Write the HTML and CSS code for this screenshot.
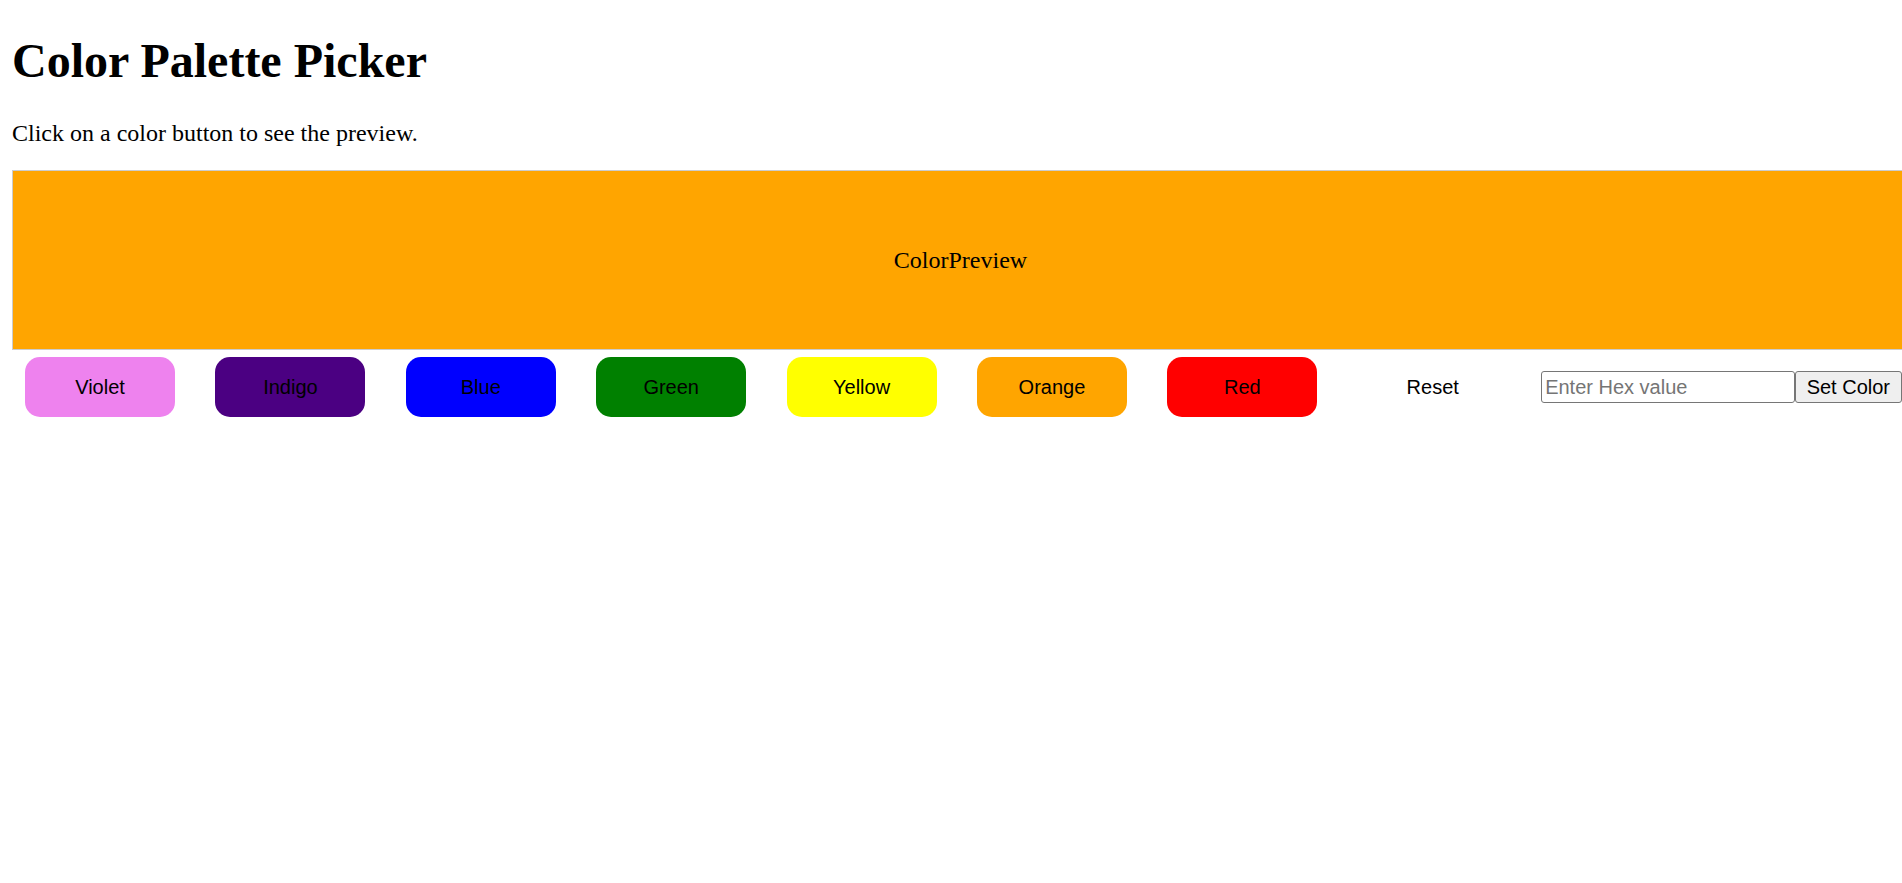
FILE: index.html
```html
<!DOCTYPE html>
<html lang="en">
<head>
<meta charset="utf-8">
<title>Color Palette Picker</title>
<link rel="stylesheet" href="styles.css">
</head>
<body>
<h1 class="title">Color Palette Picker</h1>
<p class="intro">Click on a color button to see the preview.</p>
<div class="preview">ColorPreview</div>
<div class="palette">
  <button class="swatch violet">Violet</button>
  <button class="swatch indigo">Indigo</button>
  <button class="swatch blue">Blue</button>
  <button class="swatch green">Green</button>
  <button class="swatch yellow">Yellow</button>
  <button class="swatch orange">Orange</button>
  <button class="swatch red">Red</button>
  <button class="swatch reset">Reset</button>
  <div class="hex-group">
    <input class="hex-input" type="text" placeholder="Enter Hex value">
    <button class="set-btn">Set Color</button>
  </div>
</div>
</body>
</html>
```
FILE: styles.css
```css
html {
  overflow: hidden;
}
body {
  margin: 12px 0 12px 12px;
  font-family: "Liberation Serif", "Times New Roman", serif;
  font-size: 24px;
  color: #000;
  background: #fff;
}
.title {
  font-size: 48px;
  font-weight: bold;
  margin: 21px 0 32px;
}
.intro {
  margin: 24px 0;
}
.preview {
  box-sizing: border-box;
  width: calc(100% + 7px);
  height: 180px;
  margin-top: -1px;
  background: #ffa500;
  border: 1.5px solid #cccccc;
  display: flex;
  align-items: center;
  justify-content: center;
}
.palette {
  display: flex;
  align-items: center;
  padding: 7px 0 0 13px;
  gap: 40.4px;
}
.swatch {
  flex: 0 0 auto;
  width: 150px;
  height: 60px;
  border: none;
  border-radius: 15px;
  font-family: "Liberation Sans", Arial, sans-serif;
  font-size: 20px;
  color: #000;
  padding: 0;
}
.violet { background: #ee82ee; }
.indigo { background: #4b0082; }
.blue { background: #0000ff; }
.green { background: #008000; }
.yellow { background: #ffff00; }
.orange { background: #ffa500; }
.red { background: #ff0000; }
.reset { background: transparent; }
.hex-group {
  display: flex;
  flex: 0 0 auto;
  margin-left: -7px;
}
.hex-input {
  box-sizing: border-box;
  width: 254px;
  height: 31.5px;
  margin: 0;
  padding: 1.5px 3px;
  border: 1.5px solid #767676;
  border-radius: 3px;
  font-family: "Liberation Sans", Arial, sans-serif;
  font-size: 20px;
  color: #000;
}
.hex-input::placeholder {
  color: #757575;
}
.set-btn {
  box-sizing: border-box;
  height: 31.5px;
  margin: 0;
  padding: 1.5px 10.5px;
  border: 1.5px solid #767676;
  border-radius: 3px;
  background: #efefef;
  font-family: "Liberation Sans", Arial, sans-serif;
  font-size: 20px;
  color: #000;
  white-space: nowrap;
}
```
